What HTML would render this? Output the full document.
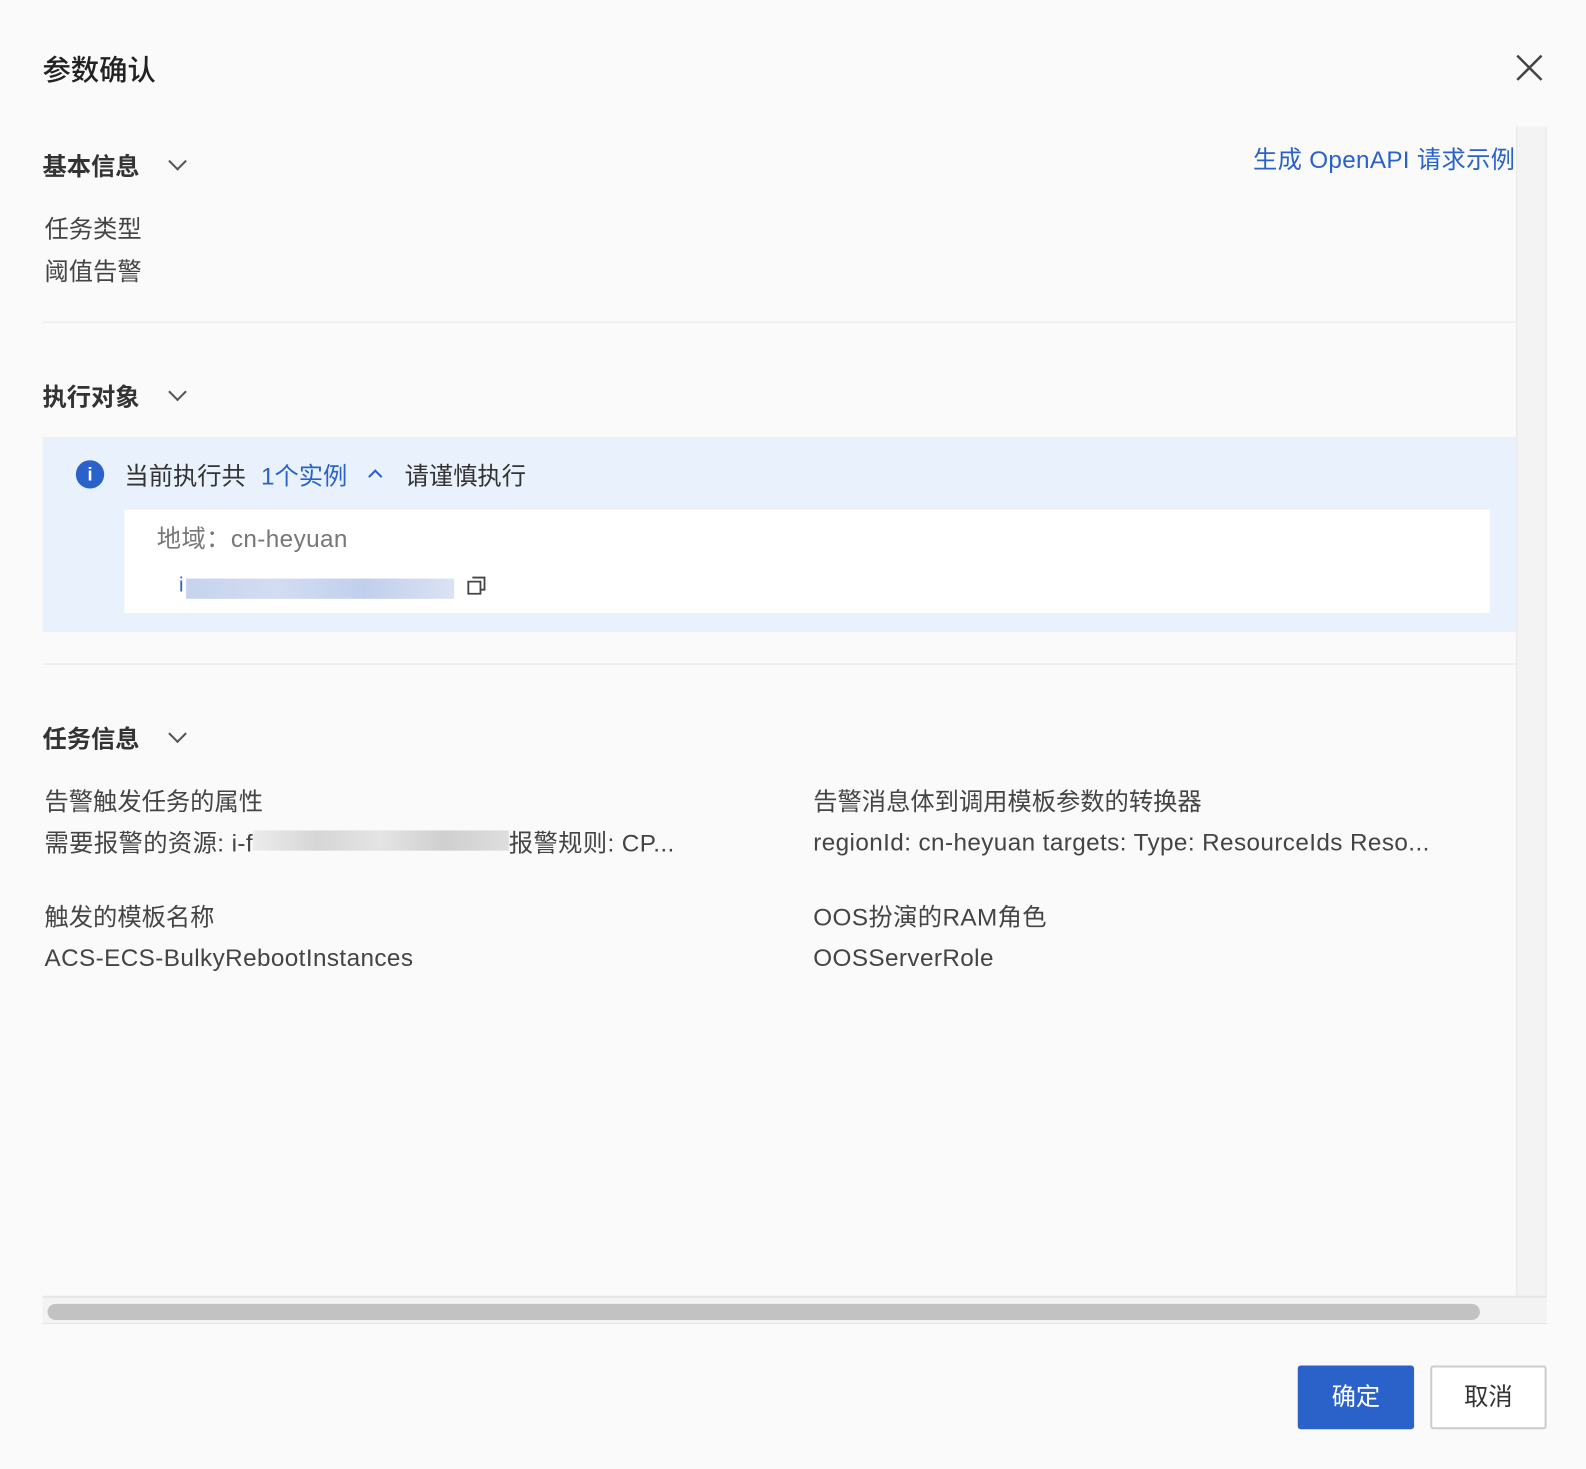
<!DOCTYPE html>
<html><head><meta charset="utf-8"><style>
*{margin:0;padding:0;box-sizing:border-box}
body{width:1586px;height:1468px;background:#fafafa;font-family:"Liberation Sans","Noto Sans CJK SC",sans-serif;color:#333;position:relative;overflow:hidden}
#w{position:absolute;left:0;top:0;width:1568px;height:1452px;transform:scale(1.0115);transform-origin:0 0}
.a{position:absolute;white-space:nowrap}
.h{font-size:24px;font-weight:bold;color:#333}
.t{font-size:24px;color:#444}
.l{letter-spacing:0.4px}
.blue{color:#2a62c9}
.chev{position:absolute;width:13px;height:13px;border-right:2px solid #555;border-bottom:2px solid #555;transform:rotate(45deg)}
</style></head><body><div id="w">
<div class="a" style="left:42px;top:48px;font-size:28px;color:#222;font-weight:500">参数确认</div>
<svg class="a" style="left:1498px;top:53px" width="28" height="28" viewBox="0 0 28 28"><path d="M2 2L26 26M26 2L2 26" stroke="#444" stroke-width="2.5"/></svg>

<div class="a" style="left:1499px;top:125px;width:30px;height:1184px;background:#f3f3f3;border-left:1px solid #e6e6e6;border-right:1px solid #e6e6e6"></div>
<div class="a" style="left:42px;top:1281px;width:1487px;height:28px;background:#f3f3f3;border-top:2px solid #e6e6e6;border-bottom:1px solid #e6e6e6"></div>
<div class="a" style="left:47px;top:1289px;width:1416px;height:16px;background:#c2c2c2;border-radius:8px"></div>

<div class="a h" style="left:42px;top:145px">基本信息</div>
<div class="chev" style="left:169px;top:153px"></div>
<div class="a blue" style="right:70px;top:138px;font-size:24px;letter-spacing:0.3px">生成 OpenAPI 请求示例</div>
<div class="a t" style="left:44px;top:207px">任务类型</div>
<div class="a t" style="left:44px;top:249px">阈值告警</div>
<div class="a" style="left:42px;top:318px;width:1457px;height:1px;background:#e6e6e6"></div>

<div class="a h" style="left:42px;top:373px">执行对象</div>
<div class="chev" style="left:169px;top:381px"></div>
<div class="a" style="left:42px;top:432px;width:1457px;height:193px;background:#e8f1fc"></div>
<div class="a" style="left:75px;top:455px;width:28px;height:28px;border-radius:50%;background:#2a62c9;color:#fff;font-size:18px;font-weight:bold;text-align:center;line-height:28px">i</div>
<div class="a t" style="left:123px;top:451px;color:#333">当前执行共</div>
<div class="a blue" style="left:258px;top:451px;font-size:24px">1个实例</div>
<div class="a" style="left:366px;top:466px;width:10px;height:10px;border-left:2px solid #2a62c9;border-top:2px solid #2a62c9;transform:rotate(45deg)"></div>
<div class="a t" style="left:400px;top:451px;color:#333">请谨慎执行</div>
<div class="a" style="left:123px;top:504px;width:1350px;height:102px;background:#fff"></div>
<div class="a l" style="left:155px;top:513px;font-size:24px;color:#777">地域：cn-heyuan</div>
<div class="a blue" style="left:177px;top:568px;font-size:20px">i</div>
<div class="a" style="left:184px;top:572px;width:265px;height:20px;background:linear-gradient(90deg,#c5d3ee,#d2ddf2,#c0cfec,#dbe3f3)"></div>
<svg class="a" style="left:460px;top:568px" width="22" height="22" viewBox="0 0 22 22"><path d="M7 3h12v12h-4M3 7h12v12H3z" fill="none" stroke="#444" stroke-width="1.8"/></svg>
<div class="a" style="left:42px;top:656px;width:1457px;height:1px;background:#e6e6e6"></div>

<div class="a h" style="left:42px;top:711px">任务信息</div>
<div class="chev" style="left:169px;top:719px"></div>
<div class="a t" style="left:44px;top:773px">告警触发任务的属性</div>
<div class="a t l" style="left:44px;top:814px">需要报警的资源: i-f</div>
<div class="a" style="left:250px;top:821px;width:253px;height:20px;background:linear-gradient(90deg,#ececec,#d6d6d6,#e4e4e4,#cfcfcf,#dedede)"></div>
<div class="a t l" style="left:503px;top:814px">报警规则: CP...</div>
<div class="a t" style="left:804px;top:773px">告警消息体到调用模板参数的转换器</div>
<div class="a t l" style="left:804px;top:820px">regionId: cn-heyuan targets: Type: ResourceIds Reso...</div>
<div class="a t" style="left:44px;top:887px">触发的模板名称</div>
<div class="a t l" style="left:44px;top:934px">ACS-ECS-BulkyRebootInstances</div>
<div class="a t l" style="left:804px;top:887px">OOS扮演的RAM角色</div>
<div class="a t l" style="left:804px;top:934px">OOSServerRole</div>

<div class="a" style="left:1283px;top:1350px;width:115px;height:63px;background:#2a62c9;border-radius:3px;color:#fff;font-size:24px;text-align:center;line-height:63px">确定</div>
<div class="a" style="left:1414px;top:1350px;width:115px;height:63px;background:#fff;border:2px solid #ccc;border-radius:3px;color:#333;font-size:24px;text-align:center;line-height:59px">取消</div>
</div></body></html>
